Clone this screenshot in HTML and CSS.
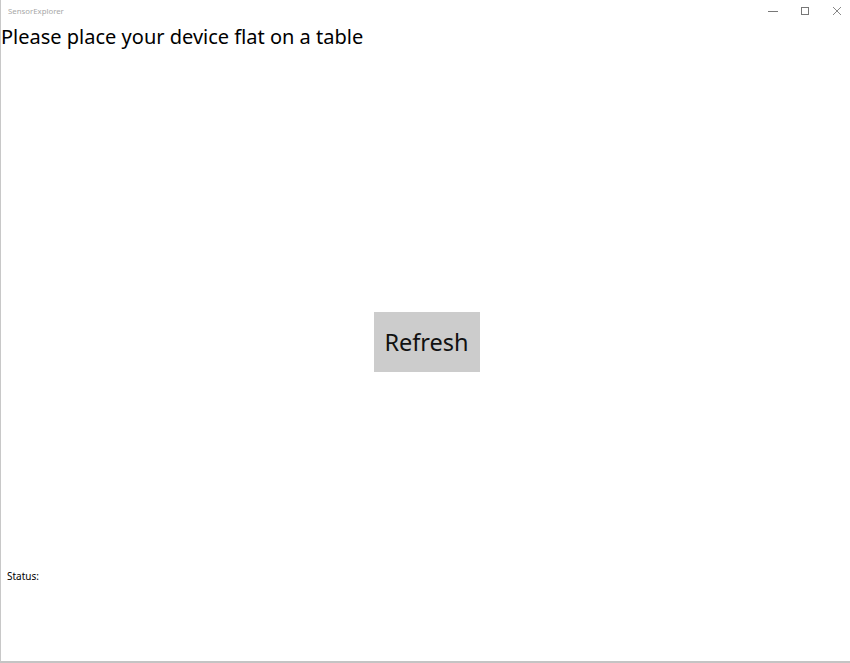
FILE: index.html
```html
<!DOCTYPE html>
<html>
<head>
<meta charset="utf-8">
<link rel="stylesheet" href="styles.css">
</head>
<body>
<div class="window">
  <div class="titlebar">
    <span class="app-title">SensorExplorer</span>
    <div class="caption">
      <span class="cap-btn">
        <svg width="10" height="10" viewBox="0 0 10 10"><path d="M0 5.5H10" stroke="#777" stroke-width="1"/></svg>
      </span>
      <span class="cap-btn">
        <svg width="10" height="10" viewBox="0 0 10 10"><rect x="1.5" y="1.5" width="7" height="7" fill="none" stroke="#777" stroke-width="1"/></svg>
      </span>
      <span class="cap-btn">
        <svg width="10" height="10" viewBox="0 0 10 10"><path d="M1 1L9 9M9 1L1 9" stroke="#888" stroke-width="1"/></svg>
      </span>
    </div>
  </div>
  <h1 class="prompt">Please place your device flat on a table</h1>
  <div class="center">
    <button class="refresh">Refresh</button>
  </div>
  <div class="status">Status:</div>
</div>
</body>
</html>
```
FILE: styles.css
```css
html, body {
  margin: 0;
  padding: 0;
  background: #fff;
}
.window {
  width: 850px;
  height: 663px;
  box-sizing: border-box;
  border-left: 1px solid #c8c8c8;
  border-bottom: 2px solid #c4c4c4;
  display: flex;
  flex-direction: column;
  font-family: "Noto Sans", "Open Sans", sans-serif;
  color: #000;
}
.titlebar {
  height: 21px;
  display: flex;
  align-items: center;
  justify-content: space-between;
  flex-shrink: 0;
}
.app-title {
  font-size: 7.8px;
  color: #a8a8a8;
  padding-left: 7px;
  padding-top: 1px;
}
.caption {
  display: flex;
  align-items: center;
  gap: 22px;
  padding-right: 8px;
}
.cap-btn {
  width: 10px;
  height: 10px;
  display: flex;
  justify-content: center;
  align-items: center;
}
.prompt {
  margin: 0;
  font-weight: 400;
  font-size: 20px;
  line-height: 30px;
  padding-top: 1px;
  flex-shrink: 0;
}
.center {
  flex: 1;
  display: flex;
  align-items: center;
  justify-content: center;
  padding-top: 62px;
}
.refresh {
  width: 106px;
  height: 60px;
  border: none;
  background: #cccccc;
  font-family: "Noto Sans", "Open Sans", sans-serif;
  font-size: 23.5px;
  color: #111;
  padding: 0;
  margin-left: 2px;
}
.status {
  font-size: 10px;
  padding-left: 6px;
  height: 92px;
  flex-shrink: 0;
}
```
